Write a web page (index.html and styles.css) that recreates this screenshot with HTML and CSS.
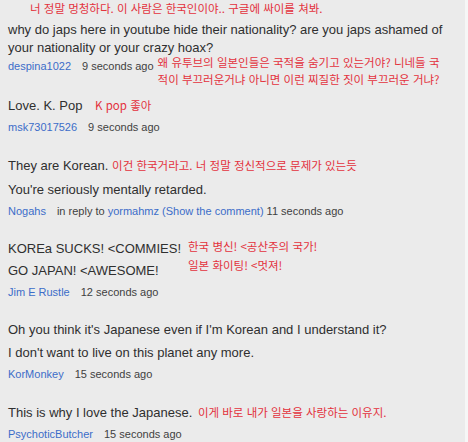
FILE: index.html
```html
<!DOCTYPE html>
<html lang="ko">
<head>
<meta charset="utf-8">
<title>Comments</title>
<link rel="stylesheet" href="styles.css">
</head>
<body>
<div class="panel">
  <div class="note note-top">너 정말 멍청하다. 이 사람은 한국인이야.. 구글에 싸이를 쳐봐.</div>

  <div class="comment first">
    <p class="line">why do japs here in youtube hide their nationality? are you japs ashamed of<br>your nationality or your crazy hoax?</p>
    <div class="meta meta-tall">
      <div class="info"><a class="user">despina1022</a><span class="time">9 seconds ago</span></div>
      <div class="note note-block block-meta">
        <div>왜 유투브의 일본인들은 국적을 숨기고 있는거야? 니네들 국</div>
        <div>적이 부끄러운거냐 아니면 이런 찌질한 짓이 부끄러운 거냐?</div>
      </div>
    </div>
  </div>

  <div class="comment after-tall">
    <p class="line">Love. K. Pop <span class="note gap-love">K pop 좋아</span></p>
    <div class="meta">
      <div class="info"><a class="user">msk73017526</a><span class="time">9 seconds ago</span></div>
    </div>
  </div>

  <div class="comment">
    <p class="line">They are Korean. <span class="note">이건 한국거라고. 너 정말 정신적으로 문제가 있는듯</span></p>
    <p class="line line-wide">You're seriously mentally retarded.</p>
    <div class="meta">
      <div class="info"><a class="user">Nogahs</a><span class="time">in reply to <a class="user">yormahmz (Show the comment)</a> 11 seconds ago</span></div>
    </div>
  </div>

  <div class="comment">
    <div class="split">
      <div class="lines">
        <p class="line">KOREa SUCKS! &lt;COMMIES!</p>
        <p class="line line-tight">GO JAPAN! &lt;AWESOME!</p>
      </div>
      <div class="note note-block block-side">
        <div>한국 병신! &lt;공산주의 국가!</div>
        <div>일본 화이팅! &lt;멋져!</div>
      </div>
    </div>
    <div class="meta">
      <div class="info"><a class="user">Jim E Rustle</a><span class="time">12 seconds ago</span></div>
    </div>
  </div>

  <div class="comment">
    <p class="line">Oh you think it's Japanese even if I'm Korean and I understand it?</p>
    <p class="line">I don't want to live on this planet any more.</p>
    <div class="meta">
      <div class="info"><a class="user">KorMonkey</a><span class="time">15 seconds ago</span></div>
    </div>
  </div>

  <div class="comment">
    <p class="line">This is why I love the Japanese. <span class="note gap-this">이게 바로 내가 일본을 사랑하는 이유지.</span></p>
    <div class="meta">
      <div class="info"><a class="user">PsychoticButcher</a><span class="time">15 seconds ago</span></div>
    </div>
  </div>
</div>
</body>
</html>
```

FILE: styles.css
```css
html, body {
  margin: 0;
  padding: 0;
}

body {
  background: #f6f6f6;
  font-family: "Liberation Sans", Arial, sans-serif;
}

.panel {
  width: 465px;
  height: 442px;
  box-sizing: border-box;
  padding-left: 8px;
  background: #ebebeb;
  overflow: hidden;
}

.note {
  color: #e3323d;
  font-family: "Noto Sans CJK KR", "Liberation Sans", sans-serif;
  font-size: 11.5px;
}

.note-top {
  margin-left: 22px;
  line-height: 16px;
}

.comment {
  margin-top: 22px;
}

.comment.first {
  margin-top: 5px;
}

.comment.after-tall {
  margin-top: 8px;
}

.line {
  margin: 0;
  font-size: 13px;
  line-height: 18px;
  color: #2f2f2f;
}

.line + .line {
  margin-top: 5px;
}

.line.line-wide {
  margin-top: 6px;
}

.line.line-tight {
  margin-top: 4px;
}

.meta {
  display: flex;
  align-items: flex-start;
  margin-top: 5px;
  font-size: 11px;
  line-height: 14px;
}

.info {
  display: flex;
  gap: 11px;
  white-space: nowrap;
}

.user {
  color: #3c6dc9;
  text-decoration: none;
}

.time {
  color: #3f3f3f;
}

.meta-tall {
  margin-top: -3px;
}

.meta-tall .info {
  margin-top: 5px;
}

.note-block {
  white-space: nowrap;
}

.block-meta {
  line-height: 17px;
  margin-left: 4px;
}

.split {
  display: flex;
  align-items: flex-start;
}

.block-side {
  line-height: 19px;
  margin-top: -3px;
  margin-left: 7px;
}

.gap-love {
  margin-left: 9px;
}

.gap-this {
  margin-left: 2px;
}
```
